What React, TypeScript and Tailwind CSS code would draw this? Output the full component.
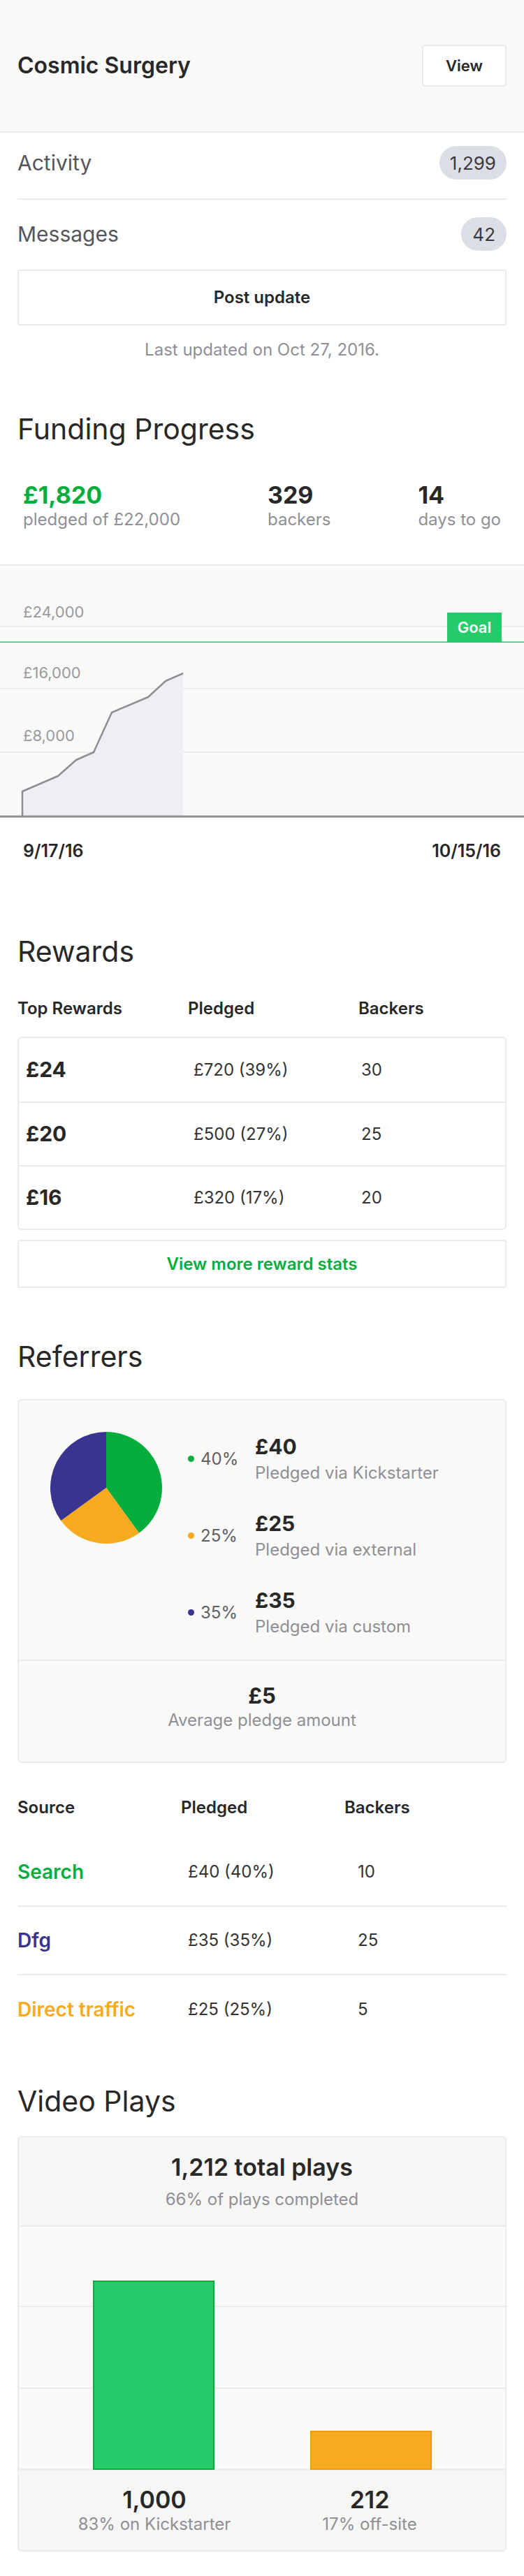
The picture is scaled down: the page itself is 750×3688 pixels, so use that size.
import React from 'react';

function FundingChart() {
  const pts: [number, number][] = [
    [32, 325], [83, 303], [109, 280], [134, 269], [160, 212], [212, 190], [237, 167], [262, 156],
  ];
  const line = `M32,360 L${pts.map((p) => p.join(',')).join(' L')}`;
  const area = `M32,360 L${pts.map((p) => p.join(',')).join(' L')} L262,360 Z`;
  return (
    <svg width="750" height="364" viewBox="0 0 750 364" className="block">
      <rect x="0" y="0" width="750" height="361" fill="#f9f9f8" />
      <rect x="0" y="0" width="750" height="2" fill="#ebebeb" />
      <g fontFamily="Inter, sans-serif" fontSize="22" fill="#9a9aa0">
        <text x="33" y="76">£24,000</text>
        <text x="33" y="163">£16,000</text>
        <text x="33" y="253">£8,000</text>
      </g>
      <rect x="0" y="88" width="750" height="2" fill="#ececec" />
      <rect x="0" y="177" width="750" height="2" fill="#ececec" />
      <rect x="0" y="268" width="750" height="2" fill="#ececec" />
      <path d={area} fill="#eeeff2" />
      <path d={line} fill="none" stroke="#8e8e94" strokeWidth="2.5" strokeLinejoin="round" />
      <rect x="0" y="110.5" width="750" height="1.5" fill="#25cb68" />
      <rect x="640" y="69" width="78" height="42" fill="#25cb68" />
      <text x="679" y="98" textAnchor="middle" fontFamily="Inter, sans-serif" fontSize="22" fontWeight="600" fill="#ffffff">
        Goal
      </text>
      <rect x="0" y="359.5" width="750" height="3" fill="#8e8e94" />
    </svg>
  );
}

function Pie() {
  return (
    <svg width="160" height="160" viewBox="0 0 160 160" className="block shrink-0">
      <path d="M80,80 L80,0 A80,80 0 0 1 127.02,144.72 Z" fill="#05ae3c" />
      <path d="M80,80 L127.02,144.72 A80,80 0 0 1 15.28,127.02 Z" fill="#f6ab1e" />
      <path d="M80,80 L15.28,127.02 A80,80 0 0 1 80,0 Z" fill="#3a3390" />
    </svg>
  );
}

function VideoChart() {
  return (
    <svg width="697" height="349" viewBox="0 0 697 349" className="block">
      <rect x="0" y="0" width="697" height="349" fill="#fafaf9" />
      <rect x="0" y="113" width="697" height="2" fill="#ececec" />
      <rect x="0" y="230" width="697" height="2" fill="#ececec" />
      <rect x="0" y="346" width="697" height="3" fill="#ececec" />
      <rect x="107" y="78" width="172" height="269" fill="#25cb68" stroke="#05ae3c" strokeWidth="2" />
      <rect x="418" y="293" width="172" height="54" fill="#f6ab1e" stroke="#ef9a10" strokeWidth="2" />
    </svg>
  );
}

const legend = [
  { dot: 'bg-[#05ae3c]', pct: '40%', amt: '£40', label: 'Pledged via Kickstarter' },
  { dot: 'bg-[#f6ab1e]', pct: '25%', amt: '£25', label: 'Pledged via external' },
  { dot: 'bg-[#3a3390]', pct: '35%', amt: '£35', label: 'Pledged via custom' },
];

const rewards = [
  { amt: '£24', pledged: '£720 (39%)', backers: '30' },
  { amt: '£20', pledged: '£500 (27%)', backers: '25' },
  { amt: '£16', pledged: '£320 (17%)', backers: '20' },
];

const sources = [
  { name: 'Search', color: 'text-[#05ae3c]', pledged: '£40 (40%)', backers: '10' },
  { name: 'Dfg', color: 'text-[#3a3390]', pledged: '£35 (35%)', backers: '25' },
  { name: 'Direct traffic', color: 'text-[#f6ab1e]', pledged: '£25 (25%)', backers: '5' },
];

export default function App() {
  return (
    <div className="w-[750px] bg-white font-['Inter',sans-serif] text-[#282828] antialiased">
      <header className="h-[190px] bg-[#f9f9f8] border-b-2 border-[#ebebeb] flex items-center justify-between px-[25px]">
        <h1 className="text-[32px] leading-[40px] font-semibold">Cosmic Surgery</h1>
        <button className="w-[121px] h-[60px] bg-white border-2 border-[#ebebeb] rounded-[4px] text-[22px] font-semibold">
          View
        </button>
      </header>

      <div className="px-[25px]">
        <div className="flex items-center justify-between pt-[19px] pb-[27px] border-b-2 border-[#ebebeb]">
          <span className="text-[30px] leading-[36px] text-[#55555b]">Activity</span>
          <span className="h-[48px] px-[15px] rounded-full bg-[#dcdee6] flex items-center text-[26px] text-[#3a3a3e]">1,299</span>
        </div>
        <div className="flex items-center justify-between pt-[25px] pb-[27px]">
          <span className="text-[30px] leading-[36px] text-[#55555b]">Messages</span>
          <span className="h-[48px] px-[16px] rounded-full bg-[#dcdee6] flex items-center text-[26px] text-[#3a3a3e]">42</span>
        </div>
        <button className="w-full h-[80px] border-2 border-[#ebebeb] rounded-[3px] bg-white text-[24px] font-semibold">
          Post update
        </button>
        <p className="mt-[18px] text-center text-[24px] leading-[34px] text-[#8f8f96]">Last updated on Oct 27, 2016.</p>

        <h2 className="mt-[72px] text-[41px] leading-[48px]">Funding Progress</h2>
        <div className="mt-[51px] px-[8px] flex justify-between">
          <div>
            <div className="text-[34px] leading-[40px] font-bold text-[#05ae3c]">£1,820</div>
            <div className="text-[24px] leading-[30px] text-[#8f8f96]">pledged of £22,000</div>
          </div>
          <div>
            <div className="text-[34px] leading-[40px] font-bold">329</div>
            <div className="text-[24px] leading-[30px] text-[#8f8f96]">backers</div>
          </div>
          <div>
            <div className="text-[34px] leading-[40px] font-bold">14</div>
            <div className="text-[24px] leading-[30px] text-[#8f8f96]">days to go</div>
          </div>
        </div>
      </div>

      <div className="mt-[49px]">
        <FundingChart />
      </div>
      <div className="mt-[31px] px-[33px] flex justify-between text-[25px] leading-[30px] font-semibold">
        <span>9/17/16</span>
        <span>10/15/16</span>
      </div>

      <div className="px-[25px]">
        <h2 className="mt-[105px] text-[41px] leading-[48px]">Rewards</h2>
        <div className="mt-[43px] grid grid-cols-[244px_244px_1fr] text-[24px] leading-[30px] font-semibold">
          <span>Top Rewards</span>
          <span>Pledged</span>
          <span>Backers</span>
        </div>
        <div className="mt-[25px] border-2 border-[#ebebeb] rounded-[6px] bg-white">
          {rewards.map((r, i) => (
            <div
              key={r.amt}
              className={`h-[91px] pl-[10px] grid grid-cols-[240px_240px_1fr] items-center ${i > 0 ? 'border-t-2 border-[#ebebeb]' : ''}`}
            >
              <span className="text-[30px] font-bold">{r.amt}</span>
              <span className="text-[24px] text-[#333]">{r.pledged}</span>
              <span className="text-[24px] text-[#333]">{r.backers}</span>
            </div>
          ))}
        </div>
        <button className="mt-[14px] w-full h-[69px] border-2 border-[#ebebeb] rounded-[3px] bg-white text-[24px] font-semibold text-[#05ae3c]">
          View more reward stats
        </button>

        <h2 className="mt-[74px] text-[41px] leading-[48px]">Referrers</h2>
        <div className="mt-[37px] border-2 border-[#ebebeb] rounded-[6px] bg-[#f9f9f8]">
          <div className="pt-[45px] pb-[32px] pl-[45px] flex items-start">
            <Pie />
            <div className="ml-[37px] mt-[3px] flex flex-col gap-[39px]">
              {legend.map((l) => (
                <div key={l.pct} className="flex items-center">
                  <div className="w-[96px] flex items-center">
                    <span className={`w-[9px] h-[9px] rounded-full ${l.dot}`} />
                    <span className="ml-[9px] text-[24px] leading-[30px] text-[#606066]">{l.pct}</span>
                  </div>
                  <div>
                    <div className="text-[30px] leading-[36px] font-bold">{l.amt}</div>
                    <div className="mt-[5px] text-[24px] leading-[30px] text-[#8f8f96]">{l.label}</div>
                  </div>
                </div>
              ))}
            </div>
          </div>
          <div className="h-[146px] border-t-2 border-[#ebebeb] pt-[32px] text-center">
            <div className="text-[31px] leading-[36px] font-bold">£5</div>
            <div className="mt-[2px] text-[24px] leading-[30px] text-[#8f8f96]">Average pledge amount</div>
          </div>
        </div>

        <div className="mt-[49px] grid grid-cols-[234px_234px_1fr] text-[24px] leading-[30px] font-semibold">
          <span>Source</span>
          <span>Pledged</span>
          <span>Backers</span>
        </div>
        <div className="mt-[29px]">
          {sources.map((s, i) => (
            <div
              key={s.name}
              className={`h-[98px] grid grid-cols-[244px_243px_1fr] items-center ${i < 2 ? 'border-b-2 border-[#ebebeb]' : ''}`}
            >
              <span className={`text-[28px] font-semibold ${s.color}`}>{s.name}</span>
              <span className="text-[24px] text-[#333]">{s.pledged}</span>
              <span className="text-[24px] text-[#333]">{s.backers}</span>
            </div>
          ))}
        </div>

        <h2 className="mt-[58px] text-[41px] leading-[48px]">Video Plays</h2>
        <div className="mt-[26px] mb-[22px] border-2 border-[#ebebeb] rounded-[6px] overflow-hidden bg-[#f6f6f5]">
          <div className="h-[128px] pt-[23px] text-center border-b-2 border-[#ebebeb]">
            <div className="text-[34px] leading-[40px] font-semibold">1,212 total plays</div>
            <div className="mt-[11px] text-[24px] leading-[30px] text-[#8f8f96]">66% of plays completed</div>
          </div>
          <VideoChart />
          <div className="h-[114px] pt-[22px] px-[40px] grid grid-cols-2 text-center">
            <div>
              <div className="text-[34px] leading-[40px] font-semibold">1,000</div>
              <div className="text-[24px] leading-[30px] text-[#8f8f96]">83% on Kickstarter</div>
            </div>
            <div>
              <div className="text-[34px] leading-[40px] font-semibold">212</div>
              <div className="text-[24px] leading-[30px] text-[#8f8f96]">17% off-site</div>
            </div>
          </div>
        </div>
      </div>
    </div>
  );
}
